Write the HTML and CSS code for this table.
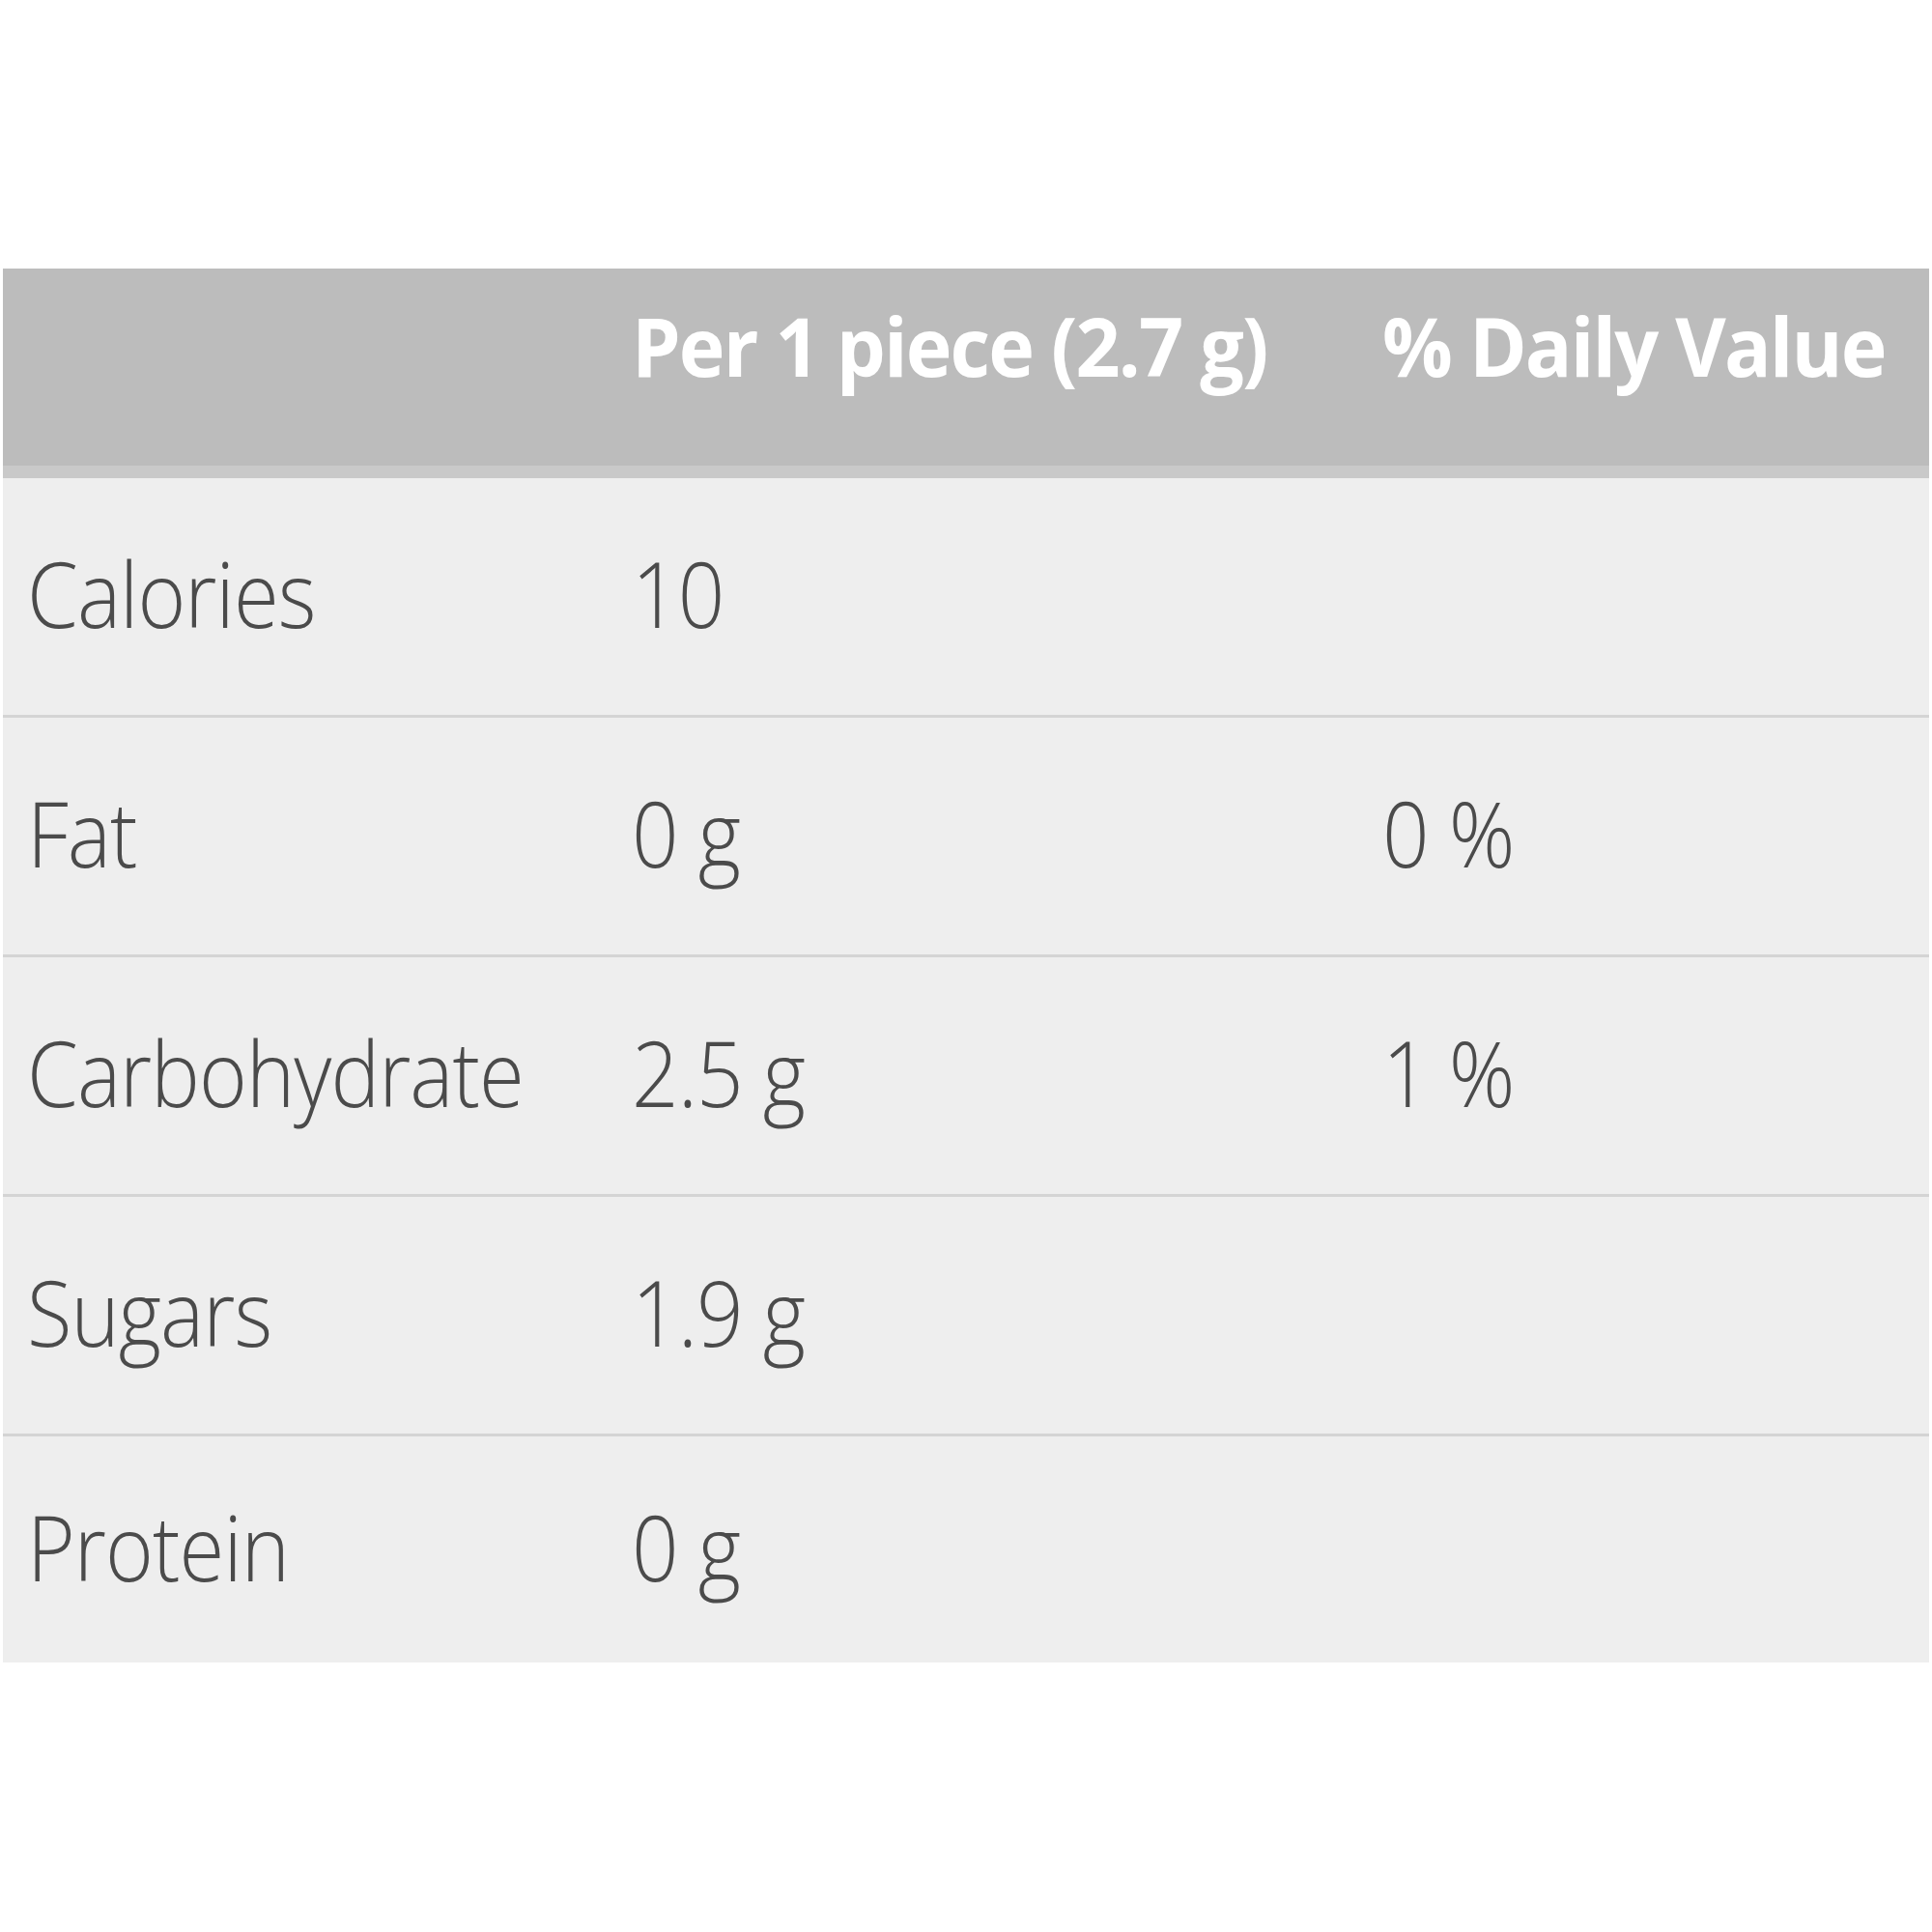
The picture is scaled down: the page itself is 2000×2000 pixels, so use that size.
FILE: index.html
```html
<!DOCTYPE html>
<html>
<head>
<meta charset="utf-8">
<link rel="stylesheet" href="styles.css">
</head>
<body>
<div class="nutrition">
  <div class="row head">
    <div class="cell"></div>
    <div class="cell"><span class="txt">Per 1 piece (2.7 g)</span></div>
    <div class="cell"><span class="txt">% Daily Value</span></div>
  </div>
  <div class="row">
    <div class="cell"><span class="txt">Calories</span></div>
    <div class="cell"><span class="txt">10</span></div>
    <div class="cell"></div>
  </div>
  <div class="row">
    <div class="cell"><span class="txt">Fat</span></div>
    <div class="cell"><span class="txt">0 g</span></div>
    <div class="cell"><span class="txt">0 %</span></div>
  </div>
  <div class="row">
    <div class="cell"><span class="txt">Carbohydrate</span></div>
    <div class="cell"><span class="txt">2.5 g</span></div>
    <div class="cell"><span class="txt">1 %</span></div>
  </div>
  <div class="row">
    <div class="cell"><span class="txt">Sugars</span></div>
    <div class="cell"><span class="txt">1.9 g</span></div>
    <div class="cell"></div>
  </div>
  <div class="row last">
    <div class="cell"><span class="txt">Protein</span></div>
    <div class="cell"><span class="txt">0 g</span></div>
    <div class="cell"></div>
  </div>
</div>
</body>
</html>
```
FILE: styles.css
```css
html, body {
  margin: 0;
  padding: 0;
  background: #ffffff;
}

.nutrition {
  margin: 278px 0 0 3px;
  width: 1994px;
  background: #eeeeee;
  font-family: "Open Sans", "Liberation Sans", sans-serif;
}

.row {
  display: grid;
  grid-template-columns: 651px 777px 1fr;
  align-items: center;
  height: 245px;
  border-bottom: 3px solid #d4d4d4;
  color: #4b4b4b;
  font-size: 94px;
  font-weight: 300;
}

.row.last {
  height: 234px;
  border-bottom: none;
}

.row.head {
  height: 204px;
  border-bottom: 13px solid #c9c9c9;
  background: #bcbcbc;
  color: #ffffff;
  font-size: 84px;
  font-weight: 700;
  align-items: start;
}

.row.head .cell {
  padding-top: 30px;
}

.cell {
  white-space: nowrap;
  line-height: 1.2;
  padding-bottom: 6px;
}

.cell:first-child {
  padding-left: 25px;
}

.txt {
  display: inline-block;
  transform: scaleX(0.905);
  transform-origin: left center;
  letter-spacing: -1px;
}

.row.head .txt {
  transform: scaleX(0.962);
  letter-spacing: -2px;
}
```
